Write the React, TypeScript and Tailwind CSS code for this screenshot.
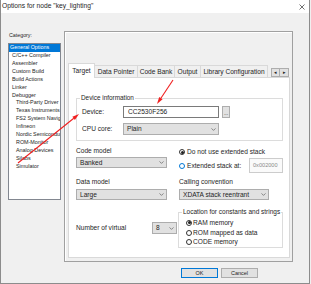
import React from 'react';

const categories = [
  { name: 'General Options', level: 0, selected: true },
  { name: 'C/C++ Compiler', level: 1 },
  { name: 'Assembler', level: 1 },
  { name: 'Custom Build', level: 1 },
  { name: 'Build Actions', level: 1 },
  { name: 'Linker', level: 1 },
  { name: 'Debugger', level: 1 },
  { name: 'Third-Party Driver', level: 2 },
  { name: 'Texas Instruments', level: 2 },
  { name: 'FS2 System Navigator', level: 2 },
  { name: 'Infineon', level: 2 },
  { name: 'Nordic Semiconductor', level: 2 },
  { name: 'ROM-Monitor', level: 2 },
  { name: 'Analog Devices', level: 2 },
  { name: 'Silabs', level: 2 },
  { name: 'Simulator', level: 2 },
];

const tabs = [
  { name: 'Target', w: 'w-[27px]' },
  { name: 'Data Pointer', w: 'w-[43px]' },
  { name: 'Code Bank', w: 'w-[37px]' },
  { name: 'Output', w: 'w-[26px]' },
  { name: 'Library Configuration', w: 'w-[67px]' },
];

const Chevron = () => (
  <svg width="5" height="3" viewBox="0 0 5 3" className="shrink-0">
    <path d="M0.5 0.4 L2.5 2.4 L4.5 0.4" fill="none" stroke="#606060" strokeWidth="0.7" />
  </svg>
);

const Select = ({ value, className = '' }: { value: string; className?: string }) => (
  <div
    className={`flex items-center justify-between border border-[#adadad] bg-[#e1e1e1] pl-[3px] pr-[2px] ${className}`}
  >
    <span>{value}</span>
    <Chevron />
  </div>
);

const Radio = ({ checked, focused }: { checked?: boolean; focused?: boolean }) => (
  <span
    className={`flex h-[6px] w-[6px] shrink-0 items-center justify-center rounded-full border bg-white ${
      focused ? 'border-[#0078d7]' : 'border-[#333333]'
    }`}
  >
    {checked && <span className="h-[3px] w-[3px] rounded-full bg-[#222222]" />}
  </span>
);

export default function App() {
  return (
    <div className="relative h-[284px] w-[311px] overflow-hidden bg-[#f0f0f0] font-['Liberation_Sans',Arial,sans-serif] text-[#1e1e1e]">
      <div className="h-[284px] w-[310px] border-x border-b border-[#8c8c8c]">
        {/* title bar */}
        <div className="flex h-[13px] items-center justify-between bg-white pl-[1px] pr-[4px] text-[6.7px]">
          <span>Options for node "key_lighting"</span>
          <svg width="6" height="6" viewBox="0 0 6 6">
            <path d="M0.5 0.5 L5.5 5.5 M5.5 0.5 L0.5 5.5" stroke="#333" strokeWidth="0.7" />
          </svg>
        </div>

        <div className="flex pt-[18px]">
          {/* category list */}
          <div className="ml-[7px] w-[53px]">
            <div className="h-[12px] pl-[1px] text-[5.3px] leading-[9px]">Category:</div>
            <div className="h-[157px] overflow-hidden border border-[#828790] bg-white text-[5.4px]">
              {categories.map((c) => (
                <div
                  key={c.name}
                  className={`h-[7.93px] overflow-hidden whitespace-nowrap leading-[7.93px] ${
                    c.selected ? 'bg-[#0078d7] pl-[1px] text-white' : c.level === 1 ? 'pl-[3px]' : 'pl-[7px]'
                  }`}
                >
                  {c.name}
                </div>
              ))}
            </div>
          </div>

          {/* right side */}
          <div className="ml-[3px] flex flex-col">
            <div className="h-[231px] w-[229px] border border-[#a0a0a0] pb-[3px] pl-[3px] pr-[2px] pt-[31px] shadow-[inset_1px_1px_0_#ffffff]">
              {/* tabs */}
              <div className="flex h-[14px] items-end text-[6.6px]">
                {tabs.map((t, i) =>
                  i === 0 ? (
                    <div
                      key={t.name}
                      className={`relative z-10 -mb-[1px] flex h-[15px] ${t.w} items-center justify-center border-x border-t border-[#d9d9d9] bg-white`}
                    >
                      {t.name}
                    </div>
                  ) : (
                    <div
                      key={t.name}
                      className={`flex h-[12px] ${t.w} items-center justify-center whitespace-nowrap border-r border-t border-[#d9d9d9] bg-[#f0f0f0]`}
                    >
                      {t.name}
                    </div>
                  ),
                )}
                <div className="ml-auto mr-[1px] flex h-[9px]">
                  <div className="flex w-[9px] items-center justify-center border border-[#adadad] bg-[#e1e1e1] text-[5px]">
                    ◂
                  </div>
                  <div className="flex w-[9px] items-center justify-center border border-l-0 border-[#adadad] bg-[#e1e1e1] text-[5px]">
                    ▸
                  </div>
                </div>
              </div>

              {/* tab pane */}
              <div className="flex h-[181px] flex-col border border-[#d9d9d9] bg-white pl-[7px] pr-[6px] text-[6.6px]">
                <fieldset className="mt-[16px] border border-[#dcdcdc]">
                  <legend className="ml-[3px] px-[1px] text-[6.4px] leading-[8px]">Device information</legend>
                  <div className="flex flex-col gap-[5px] pb-[5px] pl-[5px] pt-[4px]">
                    <div className="flex h-[12px] items-center">
                      <span className="w-[41px]">Device:</span>
                      <div className="flex h-full w-[96px] items-center border border-[#7a7a7a] bg-white pl-[4px]">
                        CC2530F256
                      </div>
                      <div className="ml-[3px] flex h-full w-[8px] items-end justify-center border border-[#adadad] bg-[#e1e1e1] pb-[2px] text-[5px] leading-[4px]">
                        ...
                      </div>
                    </div>
                    <div className="flex h-[12px] items-center">
                      <span className="w-[41px]">CPU core:</span>
                      <Select value="Plain" className="h-full w-[96px]" />
                    </div>
                  </div>
                </fieldset>

                {/* code model / stack */}
                <div className="mt-[6px] grid grid-cols-[91px_1fr] gap-x-[11px]">
                  <div className="flex flex-col">
                    <span className="h-[8px] leading-[8px]">Code model</span>
                    <Select value="Banked" className="mt-[2px] h-[11px]" />
                  </div>
                  <div className="flex flex-col pl-[1px]">
                    <div className="mt-[1px] flex h-[8px] items-center gap-[2px]">
                      <Radio checked />
                      <span>Do not use extended stack</span>
                    </div>
                    <div className="mt-[2px] flex h-[15px] items-center gap-[2px]">
                      <Radio focused />
                      <span>Extended stack at:</span>
                      <div className="ml-auto flex h-full w-[34px] items-center border border-[#cccccc] bg-[#fafafa] pl-[3px] text-[5.6px] text-[#8a8a8a]">
                        0x002000
                      </div>
                    </div>
                  </div>
                </div>

                {/* data model / calling convention */}
                <div className="mt-[5px] grid grid-cols-[91px_1fr] gap-x-[12px]">
                  <div className="flex flex-col">
                    <span className="h-[8px] leading-[8px]">Data model</span>
                    <Select value="Large" className="mt-[3px] h-[11px]" />
                  </div>
                  <div className="flex flex-col">
                    <span className="h-[8px] leading-[8px]">Calling convention</span>
                    <Select value="XDATA stack reentrant" className="mt-[3px] h-[11px] w-[90px]" />
                  </div>
                </div>

                {/* virtual registers / location */}
                <div className="mt-[8px] flex items-start">
                  <div className="mt-[14px] flex h-[12px] items-center">
                    <span className="w-[76px]">Number of virtual</span>
                    <Select value="8" className="h-full w-[25px]" />
                  </div>
                  <fieldset className="ml-auto w-[105px] border border-[#dcdcdc]">
                    <legend className="ml-[3px] whitespace-nowrap px-[1px] text-[6.5px] leading-[8px]">
                      Location for constants and strings
                    </legend>
                    <div className="flex flex-col pl-[7px] pt-[2px]">
                      {[
                        { label: 'RAM memory', checked: true },
                        { label: 'ROM mapped as data' },
                        { label: 'CODE memory' },
                      ].map((r) => (
                        <div key={r.label} className="flex h-[9.7px] items-center gap-[1px]">
                          <Radio checked={r.checked} />
                          <span>{r.label}</span>
                        </div>
                      ))}
                    </div>
                  </fieldset>
                </div>
              </div>
            </div>

            {/* dialog buttons */}
            <div className="mt-[6px] flex gap-[3px] pl-[117px] text-[5.5px]">
              <button className="flex h-[10px] w-[37px] items-center justify-center border border-[#0078d7] bg-[#e1e1e1]">
                OK
              </button>
              <button className="flex h-[10px] w-[37px] items-center justify-center border border-[#adadad] bg-[#e1e1e1]">
                Cancel
              </button>
            </div>
          </div>
        </div>
      </div>

      {/* red annotation arrows */}
      <svg className="pointer-events-none absolute inset-0" width="311" height="284" viewBox="0 0 311 284">
        <line x1="18" y1="163" x2="73.8" y2="118.2" stroke="#f02020" strokeWidth="1.1" />
        <polygon points="79,114 74.9,119.9 72.4,116.8" fill="#f02020" />
        <line x1="173" y1="80" x2="160.9" y2="98.2" stroke="#f02020" strokeWidth="1.1" />
        <polygon points="157,104 162.6,99.3 159.2,97.1" fill="#f02020" />
      </svg>
    </div>
  );
}
